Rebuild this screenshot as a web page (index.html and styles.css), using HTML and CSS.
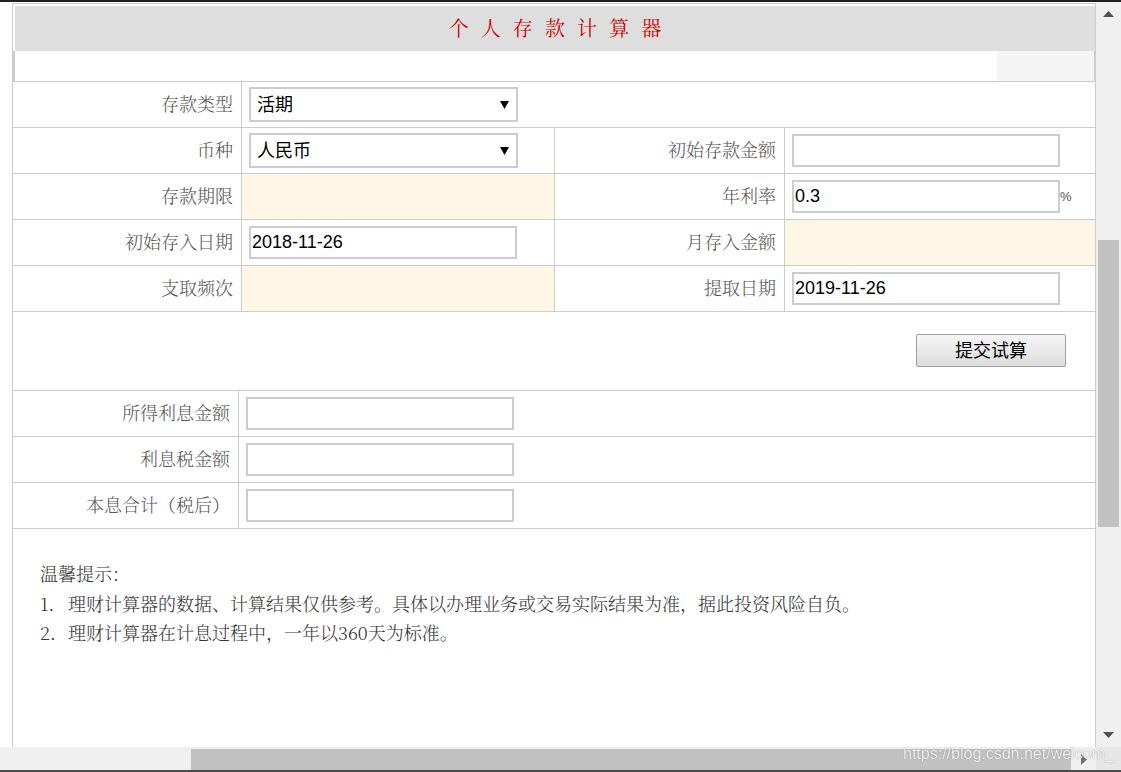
FILE: index.html
```html
<!DOCTYPE html>
<html lang="zh-CN">
<head>
<meta charset="utf-8">
<title>个人存款计算器</title>
<link rel="stylesheet" href="styles.css">
</head>
<body>
<div class="topbar"></div>
<div class="window">
  <div class="viewport">
    <div class="calc">
      <div class="calc-title">个 人 存 款 计 算 器</div>
      <div class="calc-sub"><div class="calc-sub-tab"></div></div>
      <div class="form-grid">
        <div class="cell label">存款类型</div>
        <div class="cell value span3">
          <div class="select-wrap">
            <select class="select"><option>活期</option></select>
            <svg class="caret" viewBox="0 0 9 8" width="9" height="8"><path d="M0 0H9L4.5 8Z"/></svg>
          </div>
        </div>
        <div class="cell label">币种</div>
        <div class="cell value">
          <div class="select-wrap">
            <select class="select"><option>人民币</option></select>
            <svg class="caret" viewBox="0 0 9 8" width="9" height="8"><path d="M0 0H9L4.5 8Z"/></svg>
          </div>
        </div>
        <div class="cell label">初始存款金额</div>
        <div class="cell value"><input class="input" type="text" value=""></div>

        <div class="cell label">存款期限</div>
        <div class="cell value cream"></div>
        <div class="cell label">年利率</div>
        <div class="cell value"><input class="input" type="text" value="0.3"><span class="pct">%</span></div>

        <div class="cell label">初始存入日期</div>
        <div class="cell value"><input class="input" type="text" value="2018-11-26"></div>
        <div class="cell label">月存入金额</div>
        <div class="cell value cream"></div>

        <div class="cell label">支取频次</div>
        <div class="cell value cream"></div>
        <div class="cell label">提取日期</div>
        <div class="cell value"><input class="input" type="text" value="2019-11-26"></div>

        <div class="cell action span4"><button class="btn" type="button">提交试算</button></div>
      </div>
      <div class="result-grid">
        <div class="cell label rlabel">所得利息金额</div>
        <div class="cell value"><input class="input" type="text" value=""></div>
        <div class="cell label rlabel">利息税金额</div>
        <div class="cell value"><input class="input" type="text" value=""></div>
        <div class="cell label rlabel">本息合计（税后）</div>
        <div class="cell value"><input class="input" type="text" value=""></div>
      </div>
      <div class="tips">
        <p class="tips-line">温馨提示：</p>
        <p class="tips-line"><span class="num">1.</span>理财计算器的数据、计算结果仅供参考。具体以办理业务或交易实际结果为准，据此投资风险自负。</p>
        <p class="tips-line"><span class="num">2.</span>理财计算器在计息过程中，一年以360天为标准。</p>
      </div>
    </div>
  </div>
  <div class="vscroll">
    <div class="v-arrow"><svg viewBox="0 0 11 6" width="11" height="6"><path d="M0 6L5.5 0L11 6Z"/></svg></div>
    <div class="v-gap"></div>
    <div class="v-thumb"></div>
    <div class="v-fill"></div>
    <div class="v-arrow"><svg viewBox="0 0 11 6" width="11" height="6"><path d="M0 0H11L5.5 6Z"/></svg></div>
  </div>
</div>
<div class="hbar">
  <div class="h-track">
    <div class="h-thumb"></div>
    <div class="h-arrow"><svg viewBox="0 0 6 11" width="6" height="11"><path d="M0 0L6 5.5L0 11Z"/></svg></div>
  </div>
  <div class="h-corner"></div>
</div>
<div class="bottombar"></div>
<div class="watermark">https://blog.csdn.net/welcom_</div>
</body>
</html>
```

FILE: styles.css
```css
* { box-sizing: border-box; }
html, body { margin: 0; padding: 0; }
body {
  width: 1121px;
  height: 772px;
  overflow: hidden;
  background: #fff;
  position: relative;
  font-family: "Noto Sans CJK SC", "Liberation Sans", sans-serif;
}
.topbar { height: 2px; background: #202020; }
.window { display: flex; height: 745px; }
.viewport { width: 1096px; height: 745px; overflow: hidden; background: #fff; }

.calc {
  margin: 1px 0 0 12px;
  width: 1084px;
  height: 744px;
  border: 1px solid #ccc;
  border-bottom: none;
}
.calc-title {
  margin: 2px 0 0 2px;
  height: 45px;
  background: #dedede;
  color: #cc0000;
  font-family: "Noto Serif CJK SC", "Noto Sans CJK SC", serif;
  font-size: 20px;
  line-height: 43px;
  text-align: center;
  word-spacing: 7px;
}
.calc-sub {
  height: 30px;
  border-left: 2px solid #ccc;
  border-right: 1px solid #ccc;
  display: flex;
  justify-content: flex-end;
}
.calc-sub-tab { width: 97px; background: #f4f4f4; }

.form-grid {
  display: grid;
  grid-template-columns: 228px 312px 229px 310px;
  grid-template-rows: repeat(5, 45px) 78px;
  gap: 1px;
  background: #ccc;
  border-top: 1px solid #ccc;
  border-bottom: 1px solid #ccc;
}
.result-grid {
  display: grid;
  grid-template-columns: 225px 856px;
  grid-template-rows: repeat(3, 45px);
  gap: 1px;
  background: #ccc;
  border-bottom: 1px solid #ccc;
}
.cell { background: #fff; display: flex; align-items: center; }
.span3 { grid-column: span 3; }
.span4 { grid-column: span 4; }
.label {
  justify-content: flex-end;
  padding-right: 8px;
  padding-bottom: 3px;
  color: #555;
  font-family: "Noto Serif CJK SC", "Noto Sans CJK SC", serif;
  font-size: 18px;
  font-weight: 300;
}
.rlabel { padding-right: 8px; }
.value { padding-left: 7px; }
.cream { background: #fff7e6; }
.action { justify-content: flex-end; padding-right: 29px; padding-bottom: 2px; }

.select-wrap { position: relative; width: 269px; height: 35px; }
.select {
  -webkit-appearance: none;
  appearance: none;
  width: 269px;
  height: 35px;
  margin: 0;
  border: 2px solid #ccc;
  border-radius: 0;
  background: #fff;
  padding: 0 0 3px 6px;
  font-family: "Noto Sans CJK SC", "Liberation Sans", sans-serif;
  font-size: 18px;
  color: #000;
  outline: none;
}
.caret {
  position: absolute;
  right: 9px;
  top: 14px;
  fill: #000;
  pointer-events: none;
}
.input {
  width: 268px;
  height: 33px;
  margin: 0;
  border: 2px solid #ccc;
  border-radius: 0;
  padding: 0 1px;
  font-family: "Liberation Sans", "Noto Sans CJK SC", sans-serif;
  font-size: 18px;
  color: #000;
  background: #fff;
  outline: none;
}
.pct {
  font-family: "Liberation Sans", sans-serif;
  font-size: 13px;
  color: #555;
  margin-left: 0;
}
.btn {
  width: 150px;
  height: 33px;
  margin: 0;
  border: 1px solid #a0a0a0;
  border-radius: 2px;
  background: linear-gradient(#f6f6f6, #dcdcdc);
  font-family: "Noto Sans CJK SC", sans-serif;
  font-size: 18px;
  color: #000;
  padding: 0 0 2px;
}

.tips {
  padding: 30px 0 0 27px;
  color: #333;
  font-family: "Noto Serif CJK SC", "Noto Sans CJK SC", serif;
  font-size: 18px;
  font-weight: 300;
  line-height: 29.5px;
}
.tips-line { margin: 0; white-space: nowrap; }
.num { display: inline-block; width: 28px; }

.vscroll {
  width: 25px;
  height: 745px;
  background: #f0f0f0;
  display: flex;
  flex-direction: column;
  align-items: center;
}
.v-arrow {
  height: 24px;
  width: 25px;
  display: flex;
  align-items: center;
  justify-content: center;
  fill: #505050;
}
.v-gap { height: 214px; }
.v-thumb { width: 21px; height: 287px; background: #c1c1c1; }
.v-fill { flex: 1; }

.hbar { display: flex; height: 23px; }
.h-track {
  width: 1096px;
  background: #f0f0f0;
  display: flex;
  padding-top: 2px;
}
.h-thumb { margin-left: 191px; width: 880px; height: 21px; background: #c1c1c1; }
.h-arrow {
  flex: 1;
  display: flex;
  align-items: center;
  justify-content: center;
  fill: #707070;
}
.h-corner { flex: 1; background: #e6e6e6; }
.bottombar { height: 2px; background: #4a4a4a; }

.watermark {
  position: absolute;
  left: 903px;
  top: 745px;
  font-family: "Liberation Sans", sans-serif;
  font-size: 16px;
  line-height: 18px;
  color: rgba(255, 255, 255, 0.92);
  text-shadow: 0 0 1px rgba(0, 0, 0, 0.45);
  white-space: nowrap;
}
```
